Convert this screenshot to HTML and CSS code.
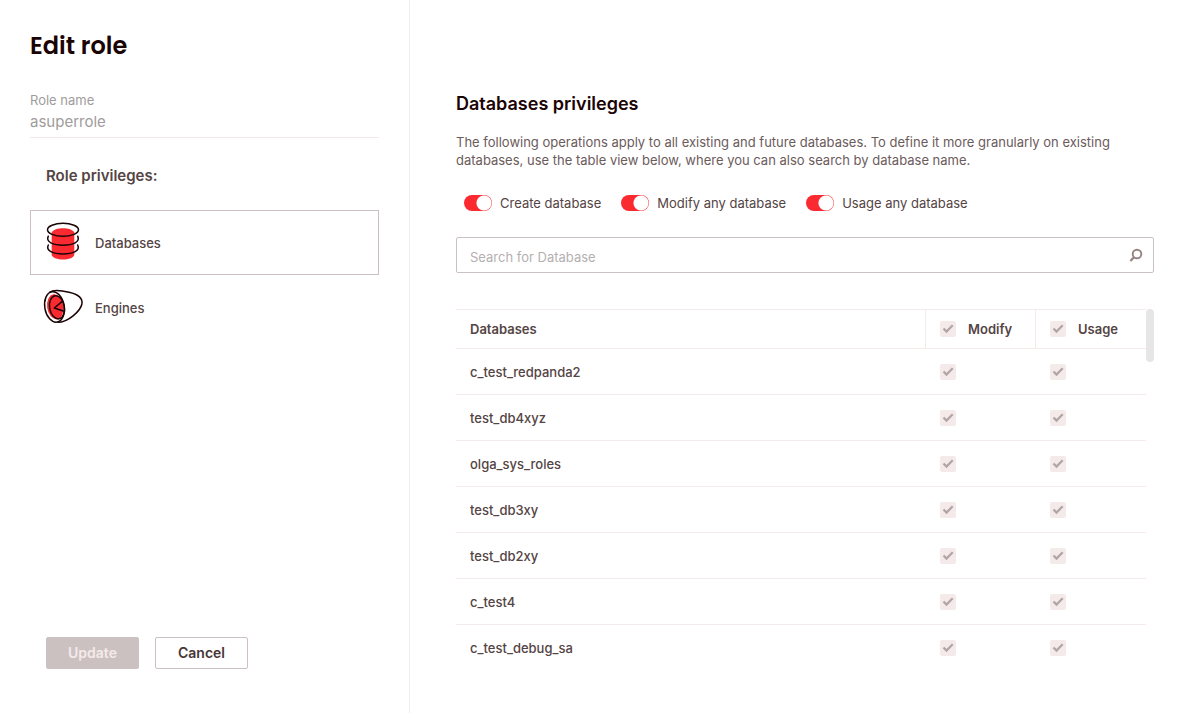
FILE: index.html
```html
<!DOCTYPE html>
<html lang="en">
<head>
<meta charset="utf-8">
<meta name="viewport" content="width=device-width, initial-scale=1">
<title>Edit role</title>
<link rel="stylesheet" href="styles.css">
</head>
<body>
<form class="page">
  <aside class="sidebar">
    <h1 class="title">Edit role</h1>
    <div class="field">
      <label class="field-label" for="role-name">Role name</label>
      <input class="field-input" id="role-name" type="text" value="asuperrole" disabled>
    </div>
    <h2 class="nav-title">Role privileges:</h2>
    <nav class="nav">
      <a class="nav-item nav-item-active" href="#databases">
        <svg class="nav-icon" viewBox="0 0 40 40" fill="none" aria-hidden="true">
          <path d="M8.700 9.500C11 3.800 29 3.800 31.300 9.500V32C29.500 38 10.500 38 8.700 32Z" fill="#fb2a31"/>
          <g stroke="#1b0404" stroke-width="1.500" stroke-linecap="round">
            <ellipse cx="20" cy="6.800" rx="15.500" ry="6.500"/>
            <path d="M5.300 13.200C2.500 19 10 22.200 20 22.200S37.500 19 34.700 13.200"/>
            <path d="M5.300 22C2.500 27.800 10 31 20 31S37.500 27.800 34.700 22"/>
          </g>
        </svg>
        Databases
      </a>
      <a class="nav-item" href="#engines">
        <svg class="nav-icon" viewBox="0 0 40 40" fill="none" aria-hidden="true">
          <ellipse cx="12.300" cy="18.700" rx="8.200" ry="12.500" transform="rotate(-8 12.300 18.700)" fill="#fb2a31"/>
          <g stroke="#1b0404" stroke-width="1.500" stroke-linejoin="round">
            <ellipse cx="11.500" cy="18.900" rx="9.700" ry="15.400" transform="rotate(-10 11.500 18.900)"/>
            <ellipse cx="14" cy="19.300" rx="7.400" ry="11.700" transform="rotate(-10 14 19.300)"/>
            <path d="M6.500 4.300C10 1.600 18 2.300 26 4.200C35.500 6.300 39.800 10.500 38.900 16C37.500 23 25 34.500 14.500 34.300"/>
            <path d="M19.500 13.200L11.300 20L21 23.200"/>
          </g>
        </svg>
        Engines
      </a>
    </nav>
    <div class="actions">
      <button class="button button-primary" type="submit" disabled>Update</button>
      <button class="button" type="button">Cancel</button>
    </div>
  </aside>

  <main class="content">
    <h2 class="heading">Databases privileges</h2>
    <p class="description">The following operations apply to all existing and future databases. To define it more granularly on existing databases, use the table view below, where you can also search by database name.</p>
    <div class="switches">
      <label class="switch"><input class="switch-input" type="checkbox" role="switch" checked>Create database</label>
      <label class="switch"><input class="switch-input" type="checkbox" role="switch" checked>Modify any database</label>
      <label class="switch"><input class="switch-input" type="checkbox" role="switch" checked>Usage any database</label>
    </div>
    <div class="search">
      <input class="search-input" type="search" placeholder="Search for Database" aria-label="Search for Database">
      <svg class="search-icon" viewBox="0 0 14 14" fill="none" stroke="#958383" aria-hidden="true">
        <circle cx="8" cy="6" r="4.300" stroke-width="1.900"/>
        <path d="M4.900 9.300L1.400 12.900" stroke-width="2.200"/>
      </svg>
    </div>
    <div class="table-area">
      <table class="table">
        <thead>
          <tr>
            <th class="name-col" scope="col">Databases</th>
            <th class="check-col" scope="col"><label class="check-label"><input class="check" type="checkbox" checked disabled>Modify</label></th>
            <th class="check-col" scope="col"><label class="check-label"><input class="check" type="checkbox" checked disabled>Usage</label></th>
          </tr>
        </thead>
        <tbody>
          <tr><td>c_test_redpanda2</td><td><input class="check" type="checkbox" aria-label="Modify c_test_redpanda2" checked disabled></td><td><input class="check" type="checkbox" aria-label="Usage c_test_redpanda2" checked disabled></td></tr>
          <tr><td>test_db4xyz</td><td><input class="check" type="checkbox" aria-label="Modify test_db4xyz" checked disabled></td><td><input class="check" type="checkbox" aria-label="Usage test_db4xyz" checked disabled></td></tr>
          <tr><td>olga_sys_roles</td><td><input class="check" type="checkbox" aria-label="Modify olga_sys_roles" checked disabled></td><td><input class="check" type="checkbox" aria-label="Usage olga_sys_roles" checked disabled></td></tr>
          <tr><td>test_db3xy</td><td><input class="check" type="checkbox" aria-label="Modify test_db3xy" checked disabled></td><td><input class="check" type="checkbox" aria-label="Usage test_db3xy" checked disabled></td></tr>
          <tr><td>test_db2xy</td><td><input class="check" type="checkbox" aria-label="Modify test_db2xy" checked disabled></td><td><input class="check" type="checkbox" aria-label="Usage test_db2xy" checked disabled></td></tr>
          <tr><td>c_test4</td><td><input class="check" type="checkbox" aria-label="Modify c_test4" checked disabled></td><td><input class="check" type="checkbox" aria-label="Usage c_test4" checked disabled></td></tr>
          <tr><td>c_test_debug_sa</td><td><input class="check" type="checkbox" aria-label="Modify c_test_debug_sa" checked disabled></td><td><input class="check" type="checkbox" aria-label="Usage c_test_debug_sa" checked disabled></td></tr>
        </tbody>
      </table>
      <div class="scroll-thumb"></div>
    </div>
  </main>
</form>
</body>
</html>
```

FILE: styles.css
```css
* {
  box-sizing: border-box;
}

body {
  margin: 0;
  background: #fff;
  color: #544444;
  font-family: Inter, "Liberation Sans", sans-serif;
  font-size: 13px;
  line-height: 18px;
}

input,
button {
  font-family: inherit;
}

.page {
  display: flex;
  min-height: 100vh;
}

.sidebar {
  display: flex;
  flex: 0 0 410px;
  flex-direction: column;
  padding: 30px 30px 44px;
  border-right: 1px solid #f5eaea;
}

.title {
  margin: 0;
  color: #1b0404;
  font-family: Poppins, Inter, sans-serif;
  font-size: 24px;
  font-weight: 600;
  line-height: 32px;
}

.field {
  display: flex;
  flex-direction: column;
  margin-top: 29px;
  border-bottom: 1px solid #f5e6e8;
  color: #a09c9c;
}

.field-input {
  width: 100%;
  height: 28px;
  padding: 0 0 4px;
  border: 0;
  background: none;
  color: inherit;
  font-size: 15px;
}

.nav-title {
  margin: 28px 16px 24px;
  font-size: 15px;
  font-weight: 600;
  line-height: 20px;
}

.nav-item {
  display: flex;
  align-items: center;
  gap: 12px;
  height: 65px;
  padding: 0 12px;
  border: 1px solid transparent;
  color: #544444;
  font-weight: 500;
  text-decoration: none;
}

.nav-item-active {
  border-color: #ccbfc3;
}

.nav-icon {
  width: 40px;
  height: 40px;
  overflow: visible;
}

.actions {
  display: flex;
  gap: 16px;
  margin-top: auto;
  padding: 0 16px;
}

.button {
  width: 93px;
  height: 32px;
  padding: 0 0 2px;
  border: 1px solid #ccc1c1;
  border-radius: 2px;
  background: #fff;
  color: #463636;
  font-size: 14px;
  font-weight: 600;
}

.button-primary {
  background: #ccc1c1;
  color: #f5eaea;
}

.content {
  flex: 1;
  min-width: 0;
  padding: 92px 44px 40px 46px;
}

.heading {
  margin: 0;
  color: #1b0404;
  font-size: 18px;
  font-weight: 600;
  line-height: 24px;
}

.description {
  margin: 17px 0 0;
  color: #6b5b5b;
}

.switches {
  display: flex;
  flex-wrap: wrap;
  gap: 20px;
  margin-top: 25px;
  padding: 0 8px;
}

.switch {
  display: flex;
  align-items: center;
  gap: 8px;
}

.switch-input {
  width: 28px;
  height: 16px;
  margin: 0;
  border-radius: 8px;
  appearance: none;
  background: #ccc1c1 radial-gradient(circle at 8px 8px, #fff 7px, transparent 8px);
}

.switch-input:checked {
  background: #fb2a31 radial-gradient(circle at 20px 8px, #fff 7px, transparent 8px);
}

.search {
  display: flex;
  align-items: center;
  height: 36px;
  margin-top: 25px;
  padding: 0 10px 0 13px;
  border: 1px solid #ccc1c1;
  border-radius: 2px;
}

.search-input {
  flex: 1;
  min-width: 0;
  height: 100%;
  padding: 4px 0 0;
  border: 0;
  outline: 0;
  background: none;
  color: #544444;
  font-size: 13px;
}

.search-input::placeholder {
  color: #b5b0b0;
}

.search-icon {
  width: 14px;
  height: 14px;
}

.table-area {
  display: flex;
  align-items: flex-start;
  margin-top: 36px;
}

.table {
  flex: 1;
  border-spacing: 0;
  font-weight: 500;
}

.table th,
.table td {
  height: 46px;
  padding: 0 14px;
  border-bottom: 1px solid #f5eaea;
  text-align: left;
}

.table th {
  height: 40px;
  border-top: 1px solid #f5eaea;
  font-weight: 600;
}

.table .check-col {
  width: 110px;
  border-left: 1px solid #f5eaea;
}

.table .check-col:last-child {
  width: 111px;
}

.table td + td {
  padding-left: 15px;
}

.table tbody tr:last-child td {
  border-bottom: 0;
}

.check-label {
  display: flex;
  align-items: center;
  gap: 12px;
}

.check {
  display: block;
  width: 16px;
  height: 16px;
  margin: 0;
  border-radius: 2px;
  appearance: none;
  background: #f5eaea;
}

.check:checked {
  background-image: url("data:image/svg+xml,%3Csvg xmlns='http://www.w3.org/2000/svg' viewBox='0 0 16 16'%3E%3Cpath d='M3.500 7.500L6.500 10.500L12.700 4.300' fill='none' stroke='%23b3a5a5' stroke-width='2.300'/%3E%3C/svg%3E");
}

.scroll-thumb {
  width: 8px;
  height: 53px;
  border-radius: 4px;
  background: #e6e6e6;
}
```
